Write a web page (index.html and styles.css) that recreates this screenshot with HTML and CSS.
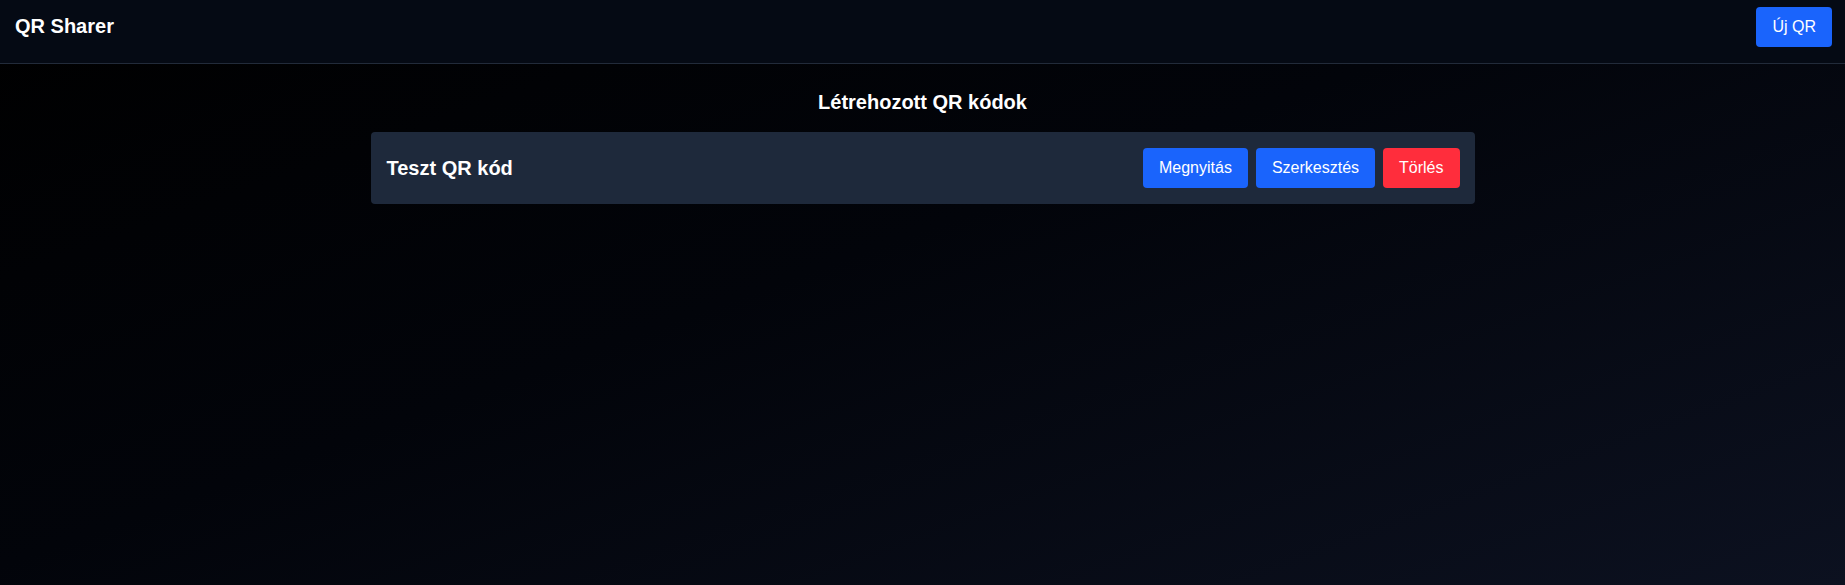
FILE: index.html
```html
<!DOCTYPE html>
<html lang="hu">
<head>
<meta charset="utf-8">
<title>QR Sharer</title>
<link rel="stylesheet" href="styles.css">
</head>
<body>
<header class="topbar">
  <div class="brand">QR Sharer</div>
  <button class="btn btn-primary">Új QR</button>
</header>
<main class="content">
  <h2 class="page-title">Létrehozott QR kódok</h2>
  <div class="qr-list">
    <div class="qr-card">
      <div class="qr-name">Teszt QR kód</div>
      <div class="qr-actions">
        <button class="btn btn-primary">Megnyitás</button>
        <button class="btn btn-primary">Szerkesztés</button>
        <button class="btn btn-danger">Törlés</button>
      </div>
    </div>
  </div>
</main>
</body>
</html>
```

FILE: styles.css
```css
* { box-sizing: border-box; }
html, body { height: 100%; }
body {
  margin: 0;
  font-family: "Liberation Sans", Arial, sans-serif;
  color: #fff;
  background: linear-gradient(160deg, #000000 0%, #02040a 45%, #0c1120 100%);
  min-height: 100vh;
}
.topbar {
  display: flex;
  align-items: center;
  justify-content: space-between;
  padding: 7px 13px 16px 15px;
  background: #050a14;
  border-bottom: 1px solid #222b3a;
}
.brand {
  font-size: 20px;
  font-weight: 700;
  line-height: 23px;
  margin-top: -1px;
}
.btn {
  font-family: "Liberation Sans", Arial, sans-serif;
  font-size: 16px;
  line-height: 18px;
  padding: 11px 16px;
  border: none;
  border-radius: 4px;
  color: #fff;
  cursor: pointer;
}
.btn-primary { background: #1a64fc; }
.btn-danger { background: #ff2d3c; }
.content {
  padding-top: 26px;
}
.page-title {
  margin: 0 0 18px;
  text-align: center;
  font-size: 20px;
  line-height: 24px;
  font-weight: 700;
}
.qr-list {
  max-width: 1104px;
  margin: 0 auto;
  display: flex;
  flex-direction: column;
  gap: 12px;
}
.qr-card {
  display: flex;
  align-items: center;
  justify-content: space-between;
  padding: 16px 15px 16px 16px;
  background: #1e293b;
  border-radius: 4px;
}
.qr-name {
  font-size: 20px;
  font-weight: 700;
  line-height: 24px;
}
.qr-actions {
  display: flex;
  gap: 8px;
}
```
